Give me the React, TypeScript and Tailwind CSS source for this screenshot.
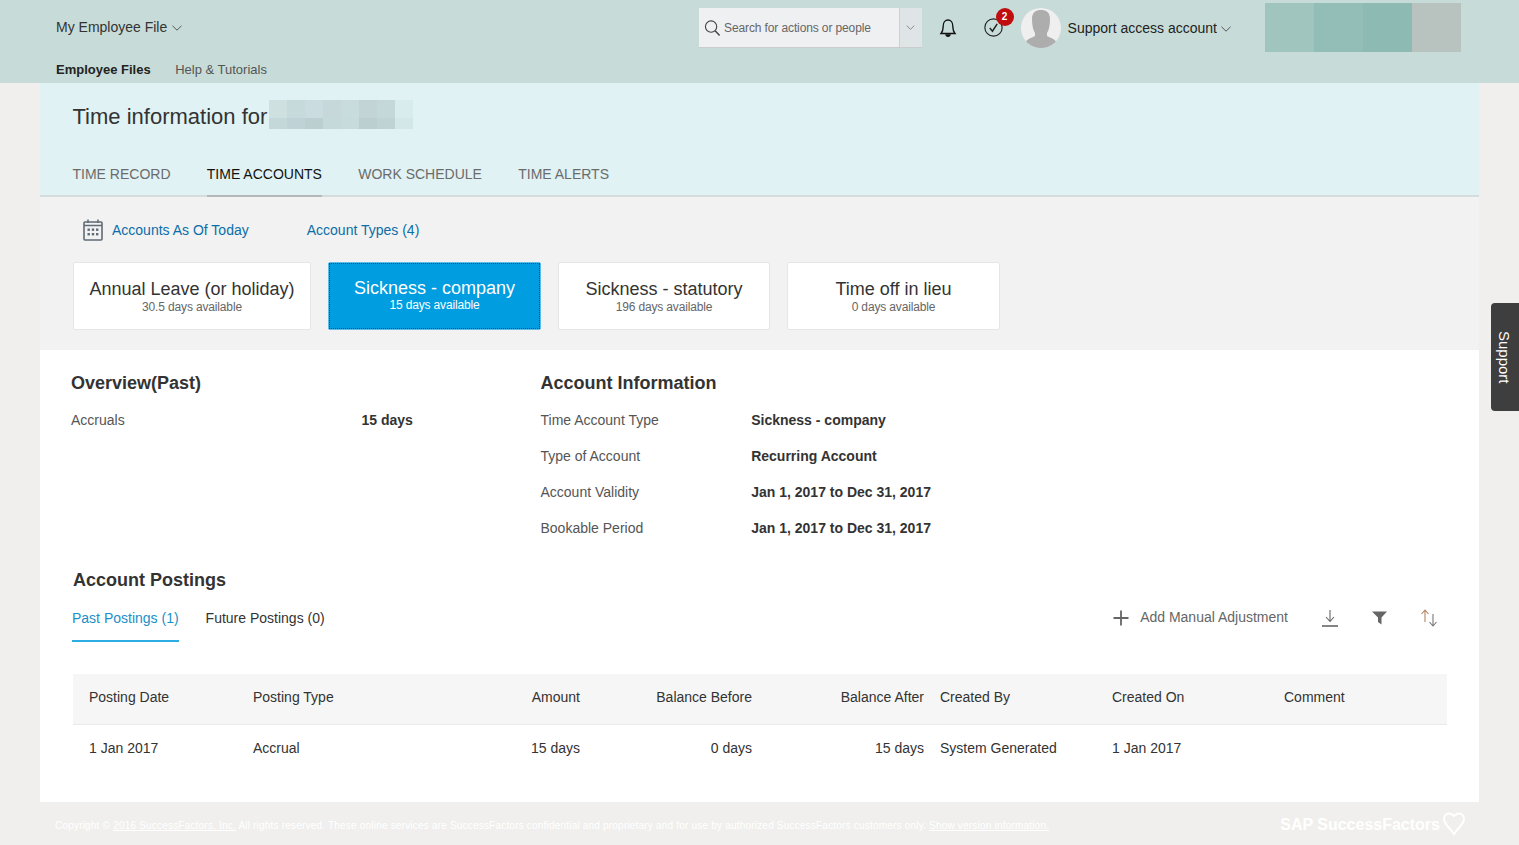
const font = { fontFamily: '"Liberation Sans", Arial, sans-serif' }

const blurTop = ['#cfe0e1', '#c6d9db', '#cadcdf', '#c6d8d9', '#c9dcdd', '#c2d4d5', '#c5d8d9', '#d8ebed']
const blurBottom = ['#c5d8d9', '#bfd2d6', '#bccfd0', '#c5d9da', '#c8dbdc', '#bccfd0', '#c0d3d4', '#d3e6e8']

const cards = [
  { title: 'Annual Leave (or holiday)', sub: '30.5 days available', w: 'w-[238px]' },
  { title: 'Sickness - company', sub: '15 days available', w: 'w-[213px]', active: true },
  { title: 'Sickness - statutory', sub: '196 days available', w: 'w-[212px]' },
  { title: 'Time off in lieu', sub: '0 days available', w: 'w-[213px]' },
]

const accountInfo = [
  ['Time Account Type', 'Sickness - company'],
  ['Type of Account', 'Recurring Account'],
  ['Account Validity', 'Jan 1, 2017 to Dec 31, 2017'],
  ['Bookable Period', 'Jan 1, 2017 to Dec 31, 2017'],
]

const gridCols = 'grid grid-cols-[164px_279px_64px_172px_172px_172px_172px_179px]'

function Chevron({ className }: { className?: string }) {
  return (
    <svg viewBox="0 0 10 6" className={className} fill="none" stroke="currentColor" strokeWidth="1">
      <path d="M0.5 0.8 L5 5.2 L9.5 0.8" />
    </svg>
  )
}

function Header() {
  return (
    <header className="h-[83px] bg-[#c7dcd8] flex flex-col">
      <div className="h-[55px] flex items-start justify-between pl-[56px] pr-[58px]">
        <button className="mt-[19px] flex items-center gap-[5px] text-[14px] leading-4 text-[#333]">
          My Employee File
          <Chevron className="w-[10px] h-[6px] mt-[2px] text-[#555]" />
        </button>
        <div className="flex items-start">
          <div className="mt-[8px] w-[223px] h-[40px] flex bg-[#eff0f2] border-b border-[#ccc]">
            <div className="w-[200px] flex items-center pl-[5px] gap-[3.5px] text-[12px] tracking-[-0.12px] text-[#666]">
              <svg viewBox="0 0 18 18" className="w-[17px] h-[18px] text-[#444]" fill="none" stroke="currentColor" strokeWidth="1.2">
                <circle cx="7.5" cy="7.5" r="6" />
                <path d="M11.8 12 L16.5 17" strokeWidth="1.6" />
              </svg>
              Search for actions or people
            </div>
            <div className="w-[23px] flex items-center justify-center bg-[#dfe4e6] border-l border-[#ccd2d4]">
              <Chevron className="w-[9px] h-[5px] text-[#777]" />
            </div>
          </div>
          <svg viewBox="0 0 18 20" className="ml-[17px] mt-[18px] w-[18px] h-[20px] text-[#111]" fill="none" stroke="currentColor" strokeWidth="1.3">
            <path d="M2 15.5 C3.8 13.5 4.2 11 4.2 8 C4.2 4.6 6.2 2 9 2 C11.8 2 13.8 4.6 13.8 8 C13.8 11 14.2 13.5 16 15.5 Z" />
            <path d="M7 17 C7.5 18.8 10.5 18.8 11 17 Z" fill="currentColor" />
          </svg>
          <div className="relative ml-[27px] mt-[18px] w-[19px] h-[19px]">
            <svg viewBox="0 0 18 18" className="w-[19px] h-[19px] text-[#222]" fill="none" stroke="currentColor" strokeWidth="1.1">
              <circle cx="9" cy="9" r="8.2" />
              <path d="M5.5 9.5 L8 12.5 L12.5 5.5" strokeWidth="1.4" />
            </svg>
            <span className="absolute -top-[10px] left-[12px] w-[18px] h-[18px] rounded-full bg-[#c00d0d] text-white text-[10px] font-bold leading-[18px] text-center">
              2
            </span>
          </div>
          <svg viewBox="0 0 40 40" className="ml-[18px] mt-[8px] w-[40px] h-[40px] rounded-full bg-[#efefef]">
            <path d="M11 11 C11 4 15 2 20 2 C25 2 29 4 29 11 C29 17 28 22 26 25 L26 28 C30 30 34 31 36 35 L37 40 L3 40 L4 35 C6 31 10 30 14 28 L14 25 C12 22 11 17 11 11 Z" fill="#adadad" />
          </svg>
          <button className="ml-[7px] mt-[20px] flex items-center gap-1 text-[14px] leading-4 text-[#222]">
            Support access account
            <Chevron className="w-[10px] h-[6px] mt-[2px] text-[#555]" />
          </button>
          <div className="ml-[34px] mt-[3px] flex h-[49px]">
            <div className="w-[49px] bg-[#9fc5be]" />
            <div className="w-[49px] bg-[#93bdb7]" />
            <div className="w-[49px] bg-[#8dbab3]" />
            <div className="w-[49px] bg-[#b8c2be]" />
          </div>
        </div>
      </div>
      <nav className="flex pl-[56px] gap-[24.5px] text-[13px] leading-4 mt-[7px]">
        <span className="font-bold text-[#222]">Employee Files</span>
        <span className="text-[#555]">Help &amp; Tutorials</span>
      </nav>
    </header>
  )
}

function TitleBand() {
  return (
    <section className="h-[114px] bg-[#e0f2f4] border-b-2 border-[#d4dcde] flex flex-col">
      <div className="h-[46px] pl-[32.5px] pt-[17px] flex items-start">
        <h1 className="text-[22px] leading-[34px] text-[#333]">Time information for</h1>
        <div className="ml-[1.5px] flex flex-col">
          <div className="flex">
            {blurTop.map((c, i) => (
              <div key={i} className="w-[18px] h-[18px]" style={{ background: c }} />
            ))}
          </div>
          <div className="flex">
            {blurBottom.map((c, i) => (
              <div key={i} className="w-[18px] h-[11px]" style={{ background: c }} />
            ))}
          </div>
        </div>
      </div>
      <div className="mt-auto flex pl-[32.5px] gap-[36.3px] text-[14px] leading-none text-[#6b6b6b]">
        <span className="pb-[14px]">TIME RECORD</span>
        <span className="pb-[14px] text-[#111] relative">
          TIME ACCOUNTS
          <span className="absolute left-0 right-0 -bottom-[2px] h-[2px] bg-[#b5b8b9]" />
        </span>
        <span className="pb-[14px]">WORK SCHEDULE</span>
        <span className="pb-[14px]">TIME ALERTS</span>
      </div>
    </section>
  )
}

function Accounts() {
  return (
    <section className="h-[153px] bg-[#f2f2f2] px-[33px]">
      <div className="h-[65px] flex items-center pt-[1px] text-[14px] text-[#0a6ea8]">
        <svg viewBox="0 0 20 22" className="ml-[10px] w-[20px] h-[22px] text-[#5f6b75]" fill="none" stroke="currentColor">
          <rect x="1" y="3" width="18" height="18" rx="1" strokeWidth="1.6" />
          <path d="M5 0.5 V4 M15 0.5 V4 M1 6.5 H19" strokeWidth="1.5" />
          <g fill="currentColor" stroke="none">
            <rect x="4.5" y="9.5" width="2.4" height="2.4" />
            <rect x="8.8" y="9.5" width="2.4" height="2.4" />
            <rect x="13" y="9.5" width="2.4" height="2.4" />
            <rect x="4.5" y="14" width="2.4" height="2.4" />
            <rect x="8.8" y="14" width="2.4" height="2.4" />
            <rect x="13" y="14" width="2.4" height="2.4" />
          </g>
        </svg>
        <span className="ml-[9px]">Accounts As Of Today</span>
        <span className="ml-[58px]">Account Types (4)</span>
      </div>
      <div className="flex gap-[17px]">
        {cards.map((card) => (
          <div
            key={card.title}
            className={
              card.active
                ? `${card.w} h-[68px] rounded-[2px] bg-[#009de0] border border-[#5bbde9] outline-1 outline-dotted -outline-offset-2 outline-[#004f7c] text-white flex flex-col items-center pt-[14px]`
                : `${card.w} h-[68px] rounded-[2px] bg-white border border-[#e6e6e6] text-[#333] flex flex-col items-center pt-[15px]`
            }
          >
            <div className="text-[18px] leading-[22px]">{card.title}</div>
            <div className={card.active ? 'text-[12px] leading-[13px] tracking-[-0.15px] text-white' : 'text-[12px] leading-[13px] mt-[1px] tracking-[-0.15px] text-[#666]'}>
              {card.sub}
            </div>
          </div>
        ))}
      </div>
    </section>
  )
}

function Overview() {
  return (
    <section className="flex pl-[31px] pt-[22px] h-[219px] text-[14px] text-[#555]">
      <div className="w-[469.5px]">
        <h2 className="text-[18px] leading-[22px] font-bold text-[#333]">Overview(Past)</h2>
        <div className="mt-[16px] flex h-[20px] items-center">
          <span className="w-[290.5px]">Accruals</span>
          <span className="font-bold text-[#333]">15 days</span>
        </div>
      </div>
      <div>
        <h2 className="text-[18px] leading-[22px] font-bold text-[#333]">Account Information</h2>
        <div className="mt-[16px] flex flex-col gap-[16px]">
          {accountInfo.map(([label, value]) => (
            <div key={label} className="flex h-[20px] items-center">
              <span className="w-[210.7px]">{label}</span>
              <span className="font-bold text-[#333]">{value}</span>
            </div>
          ))}
        </div>
      </div>
    </section>
  )
}

function Postings() {
  return (
    <section className="pl-[33px] pr-[32px] h-[233px]">
      <h2 className="text-[18px] leading-[22px] font-bold text-[#333]">Account Postings</h2>
      <div className="mt-[16px] flex items-start justify-between h-[42px]">
        <div className="-ml-[1px] flex gap-[27px] text-[14px]">
          <span className="h-[35px] pt-[1px] text-[#1a8fc9] border-b-2 border-[#2caee5]">Past Postings (1)</span>
          <span className="pt-[1px] text-[#333]">Future Postings (0)</span>
        </div>
        <div className="flex items-center pr-[9px] text-[#666]">
          <svg viewBox="0 0 16 16" className="w-[16px] h-[16px]" fill="none" stroke="currentColor" strokeWidth="1.8">
            <path d="M8 0.5 V15.5 M0.5 8 H15.5" />
          </svg>
          <span className="ml-[11px] text-[14px]">Add Manual Adjustment</span>
          <svg viewBox="0 0 18 18" className="ml-[33px] w-[18px] h-[18px]" fill="none" stroke="currentColor" strokeWidth="1.1">
            <path d="M9 1 V12 M5 8 L9 12.5 L13 8" />
            <path d="M1 17 H17" strokeWidth="1.6" />
          </svg>
          <svg viewBox="0 0 16 14" className="ml-[33px] w-[16px] h-[14px]" fill="currentColor">
            <path d="M0 0.5 H15 L9.5 6.5 V13.5 L6 11 V6.5 Z" />
          </svg>
          <svg viewBox="0 0 18 18" className="ml-[32px] w-[18px] h-[18px] text-[#b5835f]" fill="none" stroke="currentColor" strokeWidth="1.1">
            <path d="M5 1 V13 M1.5 5 L5 1 L8.5 5" />
            <path d="M13 5 V17 M9.5 13 L13 17 L16.5 13" stroke="#777" />
          </svg>
        </div>
      </div>
      <div className="mt-[25px] text-[14px] text-[#333]">
        <div className={`${gridCols} h-[51px] pb-[3px] items-center bg-[#f6f6f6] border-b border-[#ebebeb]`}>
          <span className="pl-[16px]">Posting Date</span>
          <span className="pl-[16px]">Posting Type</span>
          <span className="text-right">Amount</span>
          <span className="text-right">Balance Before</span>
          <span className="text-right">Balance After</span>
          <span className="pl-[16px]">Created By</span>
          <span className="pl-[16px]">Created On</span>
          <span className="pl-[16px]">Comment</span>
        </div>
        <div className={`${gridCols} h-[47px] items-center`}>
          <span className="pl-[16px]">1 Jan 2017</span>
          <span className="pl-[16px]">Accrual</span>
          <span className="text-right">15 days</span>
          <span className="text-right">0 days</span>
          <span className="text-right">15 days</span>
          <span className="pl-[16px]">System Generated</span>
          <span className="pl-[16px]">1 Jan 2017</span>
          <span />
        </div>
      </div>
    </section>
  )
}

function Footer() {
  return (
    <footer className="h-[43px] flex items-start justify-between pl-[55px] pr-[53px] text-white">
      <p className="mt-[18px] text-[10px] leading-3 tracking-[0.02em]">
        Copyright © <span className="underline">2016 SuccessFactors, Inc.</span> All rights reserved. These online services are SuccessFactors confidential and proprietary and for use by authorized SuccessFactors customers only.{' '}
        <span className="underline">Show version information.</span>
      </p>
      <div className="mt-[10px] flex items-start gap-[2px]">
        <span className="mt-[3px] text-[16px] leading-5 font-bold">SAP SuccessFactors</span>
        <svg viewBox="0 0 24 24" className="w-[24px] h-[24px]" fill="none" stroke="currentColor" strokeWidth="2">
          <path d="M12 22 C8 16 2 12 2 7 C2 3.5 4.5 1.5 7 1.5 C9.5 1.5 11 3 12 4 C13 3 14.5 1.5 17 1.5 C19.5 1.5 22 3.5 22 7 C22 12 16 16 12 22 Z" />
        </svg>
      </div>
    </footer>
  )
}

export default function App() {
  return (
    <div className="relative min-h-[845px] bg-[#f0efed]" style={font}>
      <Header />
      <main className="mx-[40px] bg-white">
        <TitleBand />
        <Accounts />
        <Overview />
        <Postings />
      </main>
      <Footer />
      <div className="absolute right-0 top-[303px] w-[28px] h-[108px] bg-[#3e3e3e] rounded-l-[4px] flex items-center justify-center pr-[2px]">
        <span className="[writing-mode:vertical-rl] text-[15px] text-white">Support</span>
      </div>
    </div>
  )
}
